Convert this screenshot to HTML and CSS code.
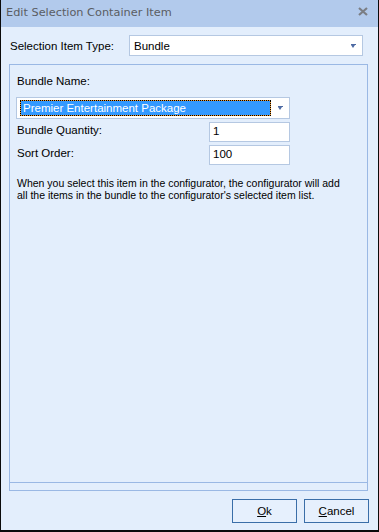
FILE: index.html
```html
<!DOCTYPE html>
<html lang="en">
<head>
    <meta charset="UTF-8">
    <title>Edit Selection Container Item</title>
    <link rel="stylesheet" href="styles.css">
</head>
<body>
    <div class="window">
        <div class="titlebar">
            <span class="title">Edit Selection Container Item</span>
            <svg class="close" width="10" height="9" viewBox="0 0 10 9">
                <path d="M1 1 L9 8 M9 1 L1 8" stroke="#7b7e84" stroke-width="2.2"/>
            </svg>
        </div>
        <div class="content">
            <div class="type-row">
                <span class="label">Selection Item Type:</span>
                <div class="combo type-combo">
                    <span class="value">Bundle</span>
                    <span class="arrow"></span>
                </div>
            </div>

            <div class="group">
                <div class="group-inner">
                    <div class="label name-label">Bundle Name:</div>
                    <div class="combo name-combo">
                        <span class="focus"><span class="selected">Premier Entertainment Package</span></span>
                        <span class="arrow"></span>
                    </div>
                    <div class="field-row">
                        <span class="label">Bundle Quantity:</span>
                        <div class="input">1</div>
                    </div>
                    <div class="field-row">
                        <span class="label">Sort Order:</span>
                        <div class="input">100</div>
                    </div>
                    <p class="note">When you select this item in the configurator, the configurator will add all the items in the bundle to the configurator's selected item list.</p>
                </div>
                <div class="group-strip"></div>
            </div>

            <div class="buttons">
                <button class="btn"><u>O</u>k</button>
                <button class="btn"><u>C</u>ancel</button>
            </div>
        </div>
    </div>
</body>
</html>
```

FILE: styles.css
```css
* {
    margin: 0;
    padding: 0;
    box-sizing: border-box;
}
body {
    background: #ffffff;
    font-family: "Liberation Sans", Arial, sans-serif;
    font-size: 11px;
    color: #000;
}
.window {
    width: 379px;
    height: 532px;
    background: #e3eefc;
    border: 1px solid #0a0a0a;
    border-top: none;
    border-bottom-width: 2px;
    display: flex;
    flex-direction: column;
}
.titlebar {
    height: 27px;
    background: #b2caec;
    display: flex;
    align-items: center;
    justify-content: space-between;
    padding: 0 10px 2px 5px;
}
.title {
    font-family: "DejaVu Sans", sans-serif;
    font-size: 11.3px;
    color: #5a5d63;
}
.close {
    display: block;
    margin-bottom: 2px;
}
.content {
    flex: 1;
    display: flex;
    flex-direction: column;
    padding: 8px 9px 0 8px;
}
.type-row {
    display: flex;
    align-items: center;
    height: 21px;
}
.type-row .label {
    width: 120px;
    padding-left: 1px;
    font-size: 11.5px;
}
.combo {
    position: relative;
    background: #fff;
    border: 1px solid #b5c8e2;
    display: flex;
    align-items: center;
}
.type-combo {
    width: 234px;
    height: 21px;
    padding-left: 4px;
    font-size: 11.5px;
}
.arrow {
    position: absolute;
    right: 7px;
    top: 9px;
    width: 0;
    height: 0;
    border-left: 2.5px solid transparent;
    border-right: 2.5px solid transparent;
    border-top: 3px solid #4d6aa3;
}
.arrow::before {
    content: "";
    position: absolute;
    left: -2.5px;
    top: -4px;
    width: 5px;
    height: 1px;
    background: #4d6aa3;
}
.group {
    margin-top: 8px;
    width: 359px;
    height: 427px;
    border: 1px solid #9ab8e4;
    display: flex;
    flex-direction: column;
}
.group-inner {
    flex: 1;
    border-bottom: 1px solid #9ab8e4;
    padding: 10px 0 0 6px;
}
.group-strip {
    height: 7px;
}
.name-label {
    padding-left: 1px;
    height: 13px;
    font-size: 11.5px;
}
.name-combo {
    margin-top: 9px;
    width: 274px;
    height: 22px;
    padding: 2px 0 2px 3px;
}
.focus {
    display: block;
    width: 251px;
    height: 16px;
    border: 1px dotted #000;
    background: #f29a2e;
}
.selected {
    display: block;
    height: 14px;
    line-height: 14px;
    background: #3399ff;
    color: #fff;
    padding-left: 2px;
    font-size: 11.5px;
    white-space: nowrap;
}
.field-row {
    display: flex;
    align-items: center;
    justify-content: space-between;
    width: 274px;
    margin-top: 3px;
    height: 20px;
}
.field-row .label {
    padding-left: 1px;
    font-size: 11.5px;
    margin-top: -4px;
}
.input {
    width: 81px;
    height: 20px;
    background: #fff;
    border: 1px solid #b5c8e2;
    padding: 2px 0 0 3px;
    font-size: 11.5px;
}
.note {
    margin-top: 12px;
    padding-left: 1px;
    width: 328px;
    font-size: 10.5px;
    line-height: 12px;
}
.buttons {
    display: flex;
    justify-content: flex-end;
    gap: 7px;
    margin-top: 8px;
}
.btn {
    width: 65px;
    height: 24px;
    background: #e6f0fd;
    border: 1px solid #3a6ea8;
    font-family: "Liberation Sans", Arial, sans-serif;
    font-size: 11.5px;
    color: #000;
}
```
